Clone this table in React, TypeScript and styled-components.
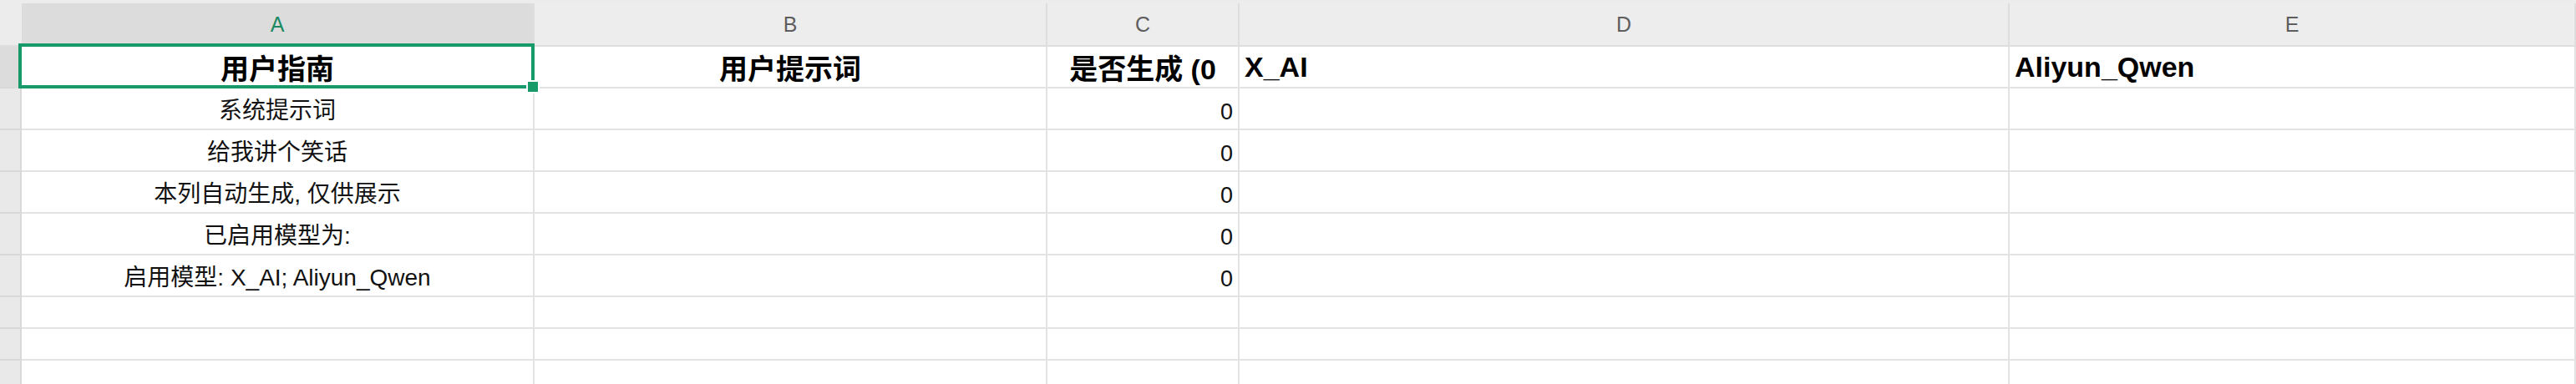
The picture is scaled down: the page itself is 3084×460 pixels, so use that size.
import React from "react";
import styled, { createGlobalStyle, css } from "styled-components";

const GlobalStyle = createGlobalStyle`
  html, body {
    margin: 0;
    padding: 0;
    background: #ffffff;
    overflow: hidden;
  }
  body {
    font-family: "Liberation Sans", "Noto Sans CJK SC", sans-serif;
    color: #111111;
  }
`;

const GREEN = "#17996a";

const Sheet = styled.div`
  width: 3084px;
  height: 460px;
  overflow: hidden;
  box-sizing: border-box;
  padding-top: 4px;
  background: linear-gradient(#ececec 0 4px, #ffffff 4px);
  display: grid;
  grid-template-columns: 26px 614px 614px 230px 922px 678px;
  grid-template-rows: 52px repeat(6, 50px) repeat(3, 38px);
`;

const Corner = styled.div`
  background: #ececec;
  border-bottom: 2px solid #dedede;
  margin-top: -4px;
`;

const ColHeader = styled.div<{ $selected?: boolean }>`
  box-sizing: border-box;
  display: flex;
  align-items: center;
  justify-content: center;
  background: ${(p) => (p.$selected ? "#dcdcdc" : "#ededed")};
  border-right: 2px solid #dedede;
  border-bottom: 2px solid #dedede;
  font-size: 25px;
  font-weight: 400;
  color: ${(p) => (p.$selected ? "#1b8a62" : "#5e5e5e")};
`;

const RowHeader = styled.div<{ $selected?: boolean }>`
  box-sizing: border-box;
  background: ${(p) => (p.$selected ? "#dcdcdc" : "#e9e9e9")};
  border-right: 2px solid #d9d9d9;
  border-bottom: 2px solid #d9d9d9;
`;

type Align = "left" | "center" | "right";

const Cell = styled.div<{ $align?: Align; $bold?: boolean; $numeric?: boolean }>`
  box-sizing: border-box;
  position: relative;
  display: flex;
  min-width: 0;
  overflow: hidden;
  white-space: nowrap;
  border-right: 2px solid #e3e3e3;
  border-bottom: 2px solid #e3e3e3;
  padding: 0 6px;
  font-size: 28px;
  color: #111111;
  align-items: center;
  justify-content: ${(p) =>
    p.$align === "right" ? "flex-end" : p.$align === "left" ? "flex-start" : "center"};
  ${(p) =>
    p.$bold &&
    css`
      font-size: 34px;
      font-weight: 700;
      color: #000000;
    `}
  ${(p) =>
    p.$numeric &&
    css`
      align-items: flex-end;
      line-height: 1;
      font-size: 27px;
      padding-bottom: 6px;
    `}
`;

const ActiveCell = styled(Cell)`
  overflow: visible;
  z-index: 2;
  &::after {
    content: "";
    position: absolute;
    left: -4px;
    top: -4px;
    right: -2px;
    bottom: -2px;
    border: 4px solid ${GREEN};
    pointer-events: none;
  }
`;

const FillHandle = styled.span`
  position: absolute;
  right: -8px;
  bottom: -8px;
  width: 12px;
  height: 12px;
  background: ${GREEN};
  border: 2px solid #ffffff;
  z-index: 3;
`;

type Row = {
  a?: string;
  b?: string;
  c?: string;
  d?: string;
  e?: string;
};

const headerRow: Row = {
  a: "用户指南",
  b: "用户提示词",
  c: "是否生成 (0",
  d: "X_AI",
  e: "Aliyun_Qwen",
};

const bodyRows: Row[] = [
  { a: "系统提示词", c: "0" },
  { a: "给我讲个笑话", c: "0" },
  { a: "本列自动生成, 仅供展示", c: "0" },
  { a: "已启用模型为:", c: "0" },
  { a: "启用模型: X_AI; Aliyun_Qwen", c: "0" },
  {},
  {},
  {},
];

const columns = ["A", "B", "C", "D", "E"];

export default function App() {
  return (
    <>
      <GlobalStyle />
      <Sheet>
        <Corner />
        {columns.map((c) => (
          <ColHeader key={c} $selected={c === "A"}>
            {c}
          </ColHeader>
        ))}

        <RowHeader $selected />
        <ActiveCell $align="center" $bold>
          {headerRow.a}
          <FillHandle />
        </ActiveCell>
        <Cell $align="center" $bold>
          {headerRow.b}
        </Cell>
        <Cell $align="center" $bold>
          {headerRow.c}
        </Cell>
        <Cell $align="left" $bold>
          {headerRow.d}
        </Cell>
        <Cell $align="left" $bold>
          {headerRow.e}
        </Cell>

        {bodyRows.map((r, i) => (
          <React.Fragment key={i}>
            <RowHeader />
            <Cell $align="center">{r.a}</Cell>
            <Cell $align="center">{r.b}</Cell>
            <Cell $align="right" $numeric>
              {r.c}
            </Cell>
            <Cell $align="left">{r.d}</Cell>
            <Cell $align="left">{r.e}</Cell>
          </React.Fragment>
        ))}
      </Sheet>
    </>
  );
}
